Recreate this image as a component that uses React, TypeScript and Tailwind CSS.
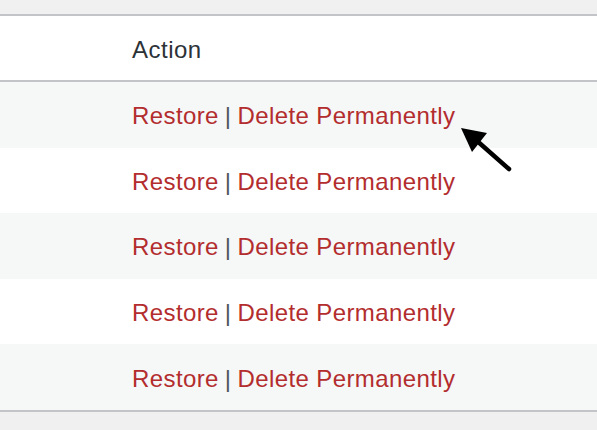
import React from 'react';

const rows = [0, 1, 2, 3, 4];

function Arrow() {
  return (
    <svg
      className="absolute left-0 top-0 pointer-events-none"
      width="597"
      height="430"
      viewBox="0 0 597 430"
    >
      <line x1="509" y1="169" x2="476" y2="140" stroke="#000" strokeWidth="4.5" strokeLinecap="round" />
      <polygon points="461,128 487,133 472,152" fill="#000" />
    </svg>
  );
}

export default function App() {
  return (
    <div
      className="relative w-[597px] h-[430px] overflow-hidden bg-[#f0f0f1]"
      style={{ fontFamily: '"Liberation Sans", Arial, sans-serif' }}
    >
      <div className="pt-[14px]">
        <div className="border-t-2 border-b-2 border-[#c3c4c7] bg-white">
          <div className="h-[64px] flex items-center pt-[3px] pl-[132px] text-[24px] tracking-[0.5px] text-[#2c3338]">
            Action
          </div>
        </div>
        <div className="border-b-2 border-[#c3c4c7]">
          {rows.map((i) => (
            <div
              key={i}
              className={`h-[65.6px] flex items-center pt-[3px] pl-[132px] text-[24px] tracking-[0.4px] ${
                i % 2 === 0 ? 'bg-[#f6f7f7]' : 'bg-white'
              }`}
            >
              <a className="text-[#b32d2e]">Restore</a>
              <span className="text-[#50575e] mx-[6px]">|</span>
              <a className="text-[#b32d2e]">Delete Permanently</a>
            </div>
          ))}
        </div>
      </div>
      <Arrow />
    </div>
  );
}
